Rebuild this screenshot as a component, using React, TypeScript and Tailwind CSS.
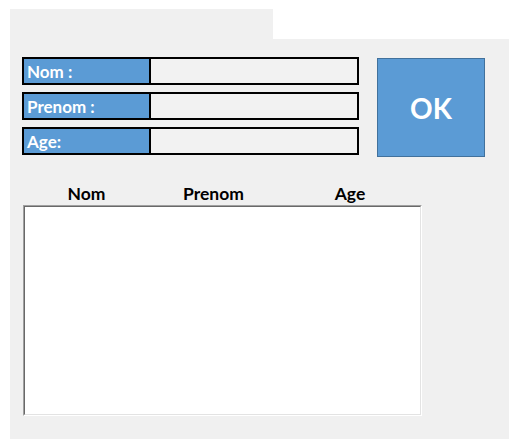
export default function App() {
  const fields = ["Nom :", "Prenom :", "Age:"];

  return (
    <div
      className="w-[529px] h-[448px] bg-white pl-[10px] pt-[9px]"
      style={{ fontFamily: "Lato, 'Open Sans', sans-serif" }}
    >
      <div className="w-[499px] h-[430px] flex flex-col">
        {/* top strip with the white notch on the right */}
        <div className="flex h-[30px]">
          <div className="w-[263px] bg-[#f0f0f0]" />
          <div className="flex-1 bg-white" />
        </div>

        <div className="flex-1 bg-[#f0f0f0] flex flex-col">
          {/* form + button */}
          <div className="flex items-start pl-[12px] pt-[18px]">
            <div className="flex flex-col gap-[7px]">
              {fields.map((f) => (
                <div
                  key={f}
                  className="flex w-[337px] h-[28px] border-2 border-black"
                >
                  <div className="w-[127px] bg-[#5b9bd5] border-r-2 border-black text-white font-bold text-[17px] leading-[25px] pl-[3px]">
                    {f}
                  </div>
                  <div className="flex-1 bg-[#f2f2f2]" />
                </div>
              ))}
            </div>
            <button className="ml-[18px] mt-[1px] w-[108px] h-[99px] bg-[#5b9bd5] border border-[#41719c] text-white font-bold text-[28px] flex items-center justify-center">
              OK
            </button>
          </div>

          {/* list headers */}
          <div className="grid grid-cols-[127px_127px_146px] ml-[13px] mt-[27px] h-[21px] text-[17.5px] font-bold text-black leading-[20px]">
            <div className="text-center">Nom</div>
            <div className="text-center">Prenom</div>
            <div className="text-center">Age</div>
          </div>

          {/* list box */}
          <div className="ml-[13px] w-[399px] h-[211px] border border-t-[#a0a0a0] border-l-[#a0a0a0] border-r-white border-b-white">
            <div className="w-full h-full bg-white border border-t-[#696969] border-l-[#696969] border-r-[#e3e3e3] border-b-[#e3e3e3]" />
          </div>
        </div>
      </div>
    </div>
  );
}
